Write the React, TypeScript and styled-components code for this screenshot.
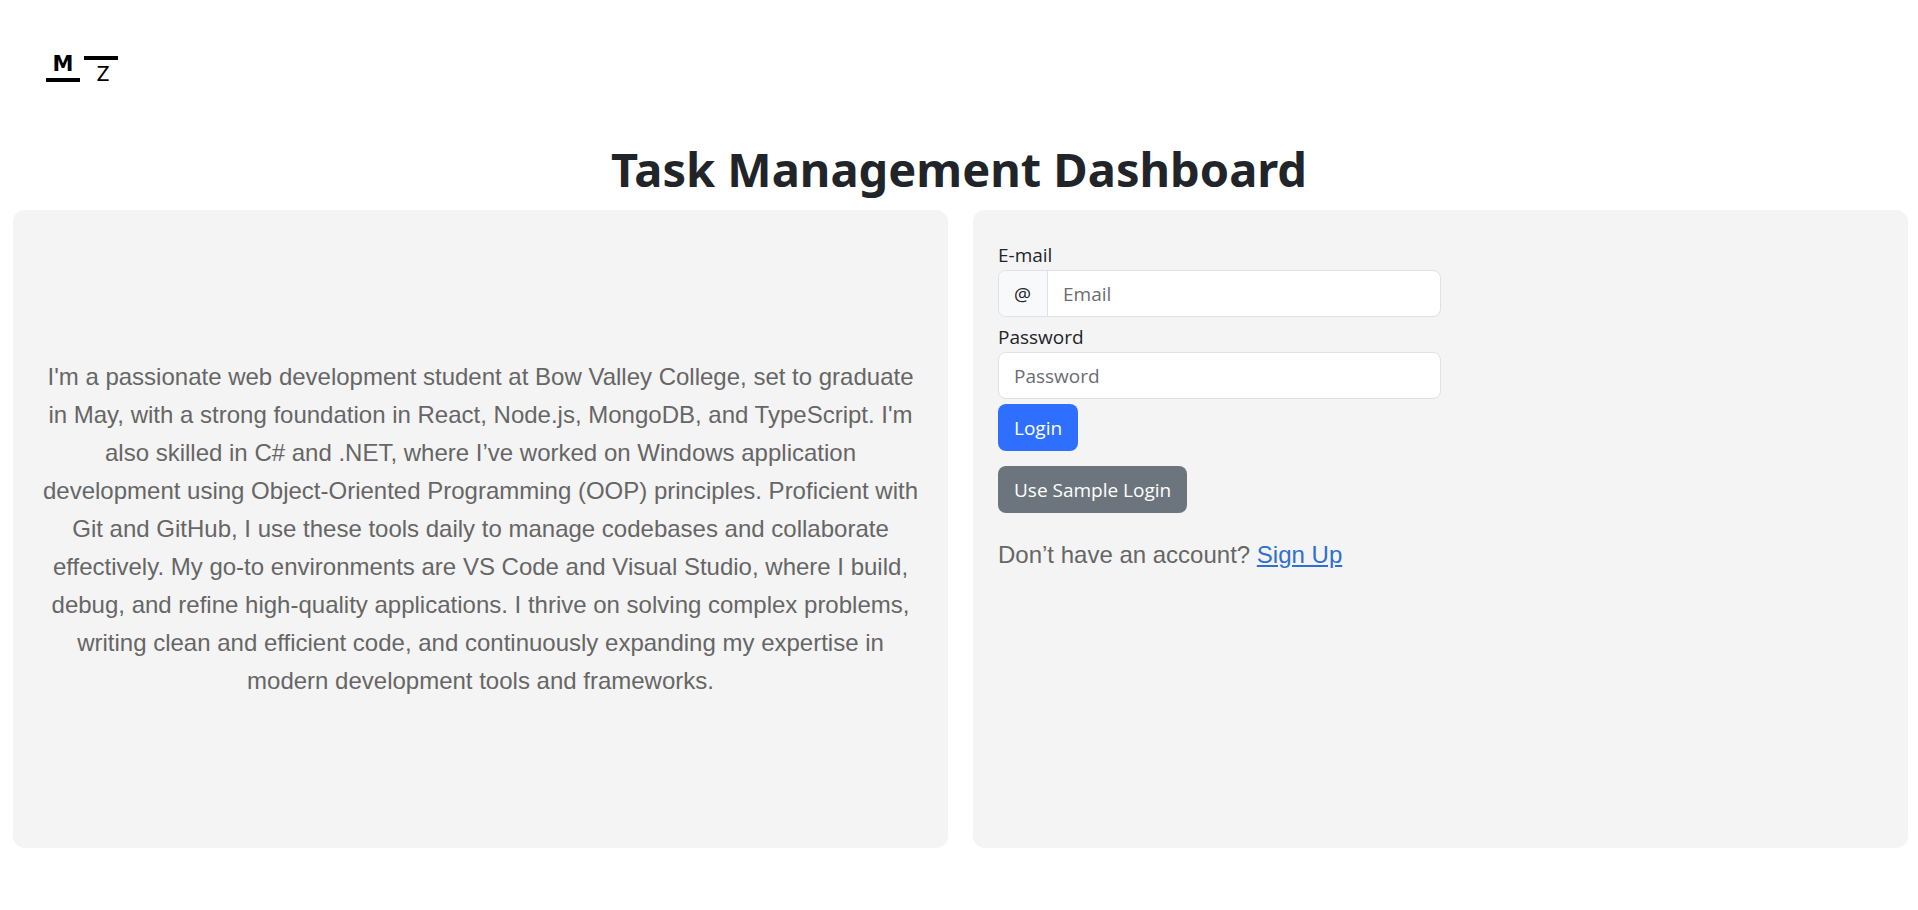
import React, { useState } from "react";
import styled, { createGlobalStyle } from "styled-components";

const uiFont = `"Segoe UI", "Open Sans", "Noto Sans", sans-serif`;
const headingFont = `"Segoe UI", "Noto Sans", sans-serif`;
const bodyFont = `Arial, "Liberation Sans", sans-serif`;

const GlobalStyle = createGlobalStyle`
  *, *::before, *::after { box-sizing: border-box; }
  body {
    margin: 0;
    background: #fff;
    color: #212529;
    font-family: ${uiFont};
    font-size: 19px;
    line-height: 29px;
  }
`;

const Header = styled.header`
  padding: 48px 40px 0;
`;

const LogoLink = styled.a`
  display: block;
  width: 84px;
  height: 40px;
`;

const Title = styled.h1`
  margin: 51px 0 11px;
  text-align: center;
  font-family: ${headingFont};
  font-size: 47px;
  font-weight: 700;
  line-height: 60px;
`;

const Columns = styled.main`
  display: grid;
  grid-template-columns: 1fr 1fr;
  gap: 25px;
  padding: 0 10px 24px 13px;
`;

const Panel = styled.section<{ $centered?: boolean }>`
  display: flex;
  flex-direction: column;
  align-items: ${(p) => (p.$centered ? "center" : "stretch")};
  justify-content: ${(p) => (p.$centered ? "center" : "flex-start")};
  min-height: 638px;
  padding: 25px;
  border-radius: 12px;
  background: #f4f4f4;
`;

const Text = styled.p<{ $align?: "center" | "left" }>`
  margin: 0;
  color: #666;
  font-family: ${bodyFont};
  font-size: 24px;
  line-height: 38px;
  text-align: ${(p) => p.$align ?? "left"};
`;

const Form = styled.form`
  display: flex;
  flex-direction: column;
  align-items: flex-start;
  margin-bottom: 23px;
`;

const Field = styled.div`
  width: 50%;
  padding-top: 6px;
`;

const Label = styled.label`
  display: block;
`;

const InputGroup = styled.div`
  display: flex;
  height: 47px;
  border: 1px solid #dee2e6;
  border-radius: 8px;
  background: #fff;
  overflow: hidden;
`;

const Addon = styled.span`
  display: flex;
  align-items: center;
  padding: 2px 16px 0 15px;
  border-right: 1px solid #dee2e6;
  background: #f8f9fa;
`;

const Input = styled.input`
  flex: 1;
  min-width: 0;
  padding: 2px 15px 0;
  border: 0;
  outline: 0;
  background: transparent;
  color: #212529;
  font: inherit;

  &::placeholder {
    color: #6a6d71;
    opacity: 1;
  }
`;

const Button = styled.button<{ $tone: "primary" | "secondary" }>`
  height: 47px;
  margin-top: ${(p) => (p.$tone === "primary" ? 5 : 15)}px;
  padding: 2px 16px 0;
  border: 0;
  border-radius: 8px;
  background: ${(p) => (p.$tone === "primary" ? "#2f6fff" : "#6c757d")};
  color: #fff;
  font: inherit;
  cursor: pointer;
`;

const Link = styled.a`
  color: #2f6fd0;
  text-decoration: underline;
`;

function Logo() {
  return (
    <svg width="84" height="40" viewBox="0 0 84 40" role="img" aria-label="MZ">
      <rect x="6" y="30" width="34" height="4" />
      <rect x="44" y="8" width="34" height="4" />
      <text x="23" y="23" textAnchor="middle" fontFamily="DejaVu Sans, sans-serif" fontSize="21" fontWeight="700">
        M
      </text>
      <text x="63" y="33" textAnchor="middle" fontFamily="Lato, sans-serif" fontSize="21">
        Z
      </text>
    </svg>
  );
}

export default function App() {
  const [email, setEmail] = useState("");
  const [password, setPassword] = useState("");

  return (
    <>
      <GlobalStyle />
      <Header>
        <LogoLink href="#">
          <Logo />
        </LogoLink>
      </Header>
      <Title>Task Management Dashboard</Title>
      <Columns>
        <Panel $centered>
          <Text $align="center">
            I'm a passionate web development student at Bow Valley College, set to graduate in May, with a strong
            foundation in React, Node.js, MongoDB, and TypeScript. I'm also skilled in C# and .NET, where I’ve worked
            on Windows application development using Object-Oriented Programming (OOP) principles. Proficient with Git
            and GitHub, I use these tools daily to manage codebases and collaborate effectively. My go-to environments
            are VS Code and Visual Studio, where I build, debug, and refine high-quality applications. I thrive on
            solving complex problems, writing clean and efficient code, and continuously expanding my expertise in
            modern development tools and frameworks.
          </Text>
        </Panel>
        <Panel>
          <Form onSubmit={(e) => e.preventDefault()}>
            <Field>
              <Label htmlFor="email">E-mail</Label>
              <InputGroup>
                <Addon>@</Addon>
                <Input
                  id="email"
                  type="email"
                  placeholder="Email"
                  value={email}
                  onChange={(e) => setEmail(e.target.value)}
                />
              </InputGroup>
            </Field>
            <Field>
              <Label htmlFor="password">Password</Label>
              <InputGroup>
                <Input
                  id="password"
                  type="password"
                  placeholder="Password"
                  value={password}
                  onChange={(e) => setPassword(e.target.value)}
                />
              </InputGroup>
            </Field>
            <Button type="submit" $tone="primary">
              Login
            </Button>
            <Button type="button" $tone="secondary">
              Use Sample Login
            </Button>
          </Form>
          <Text>
            Don’t have an account? <Link href="#signup">Sign Up</Link>
          </Text>
        </Panel>
      </Columns>
    </>
  );
}
